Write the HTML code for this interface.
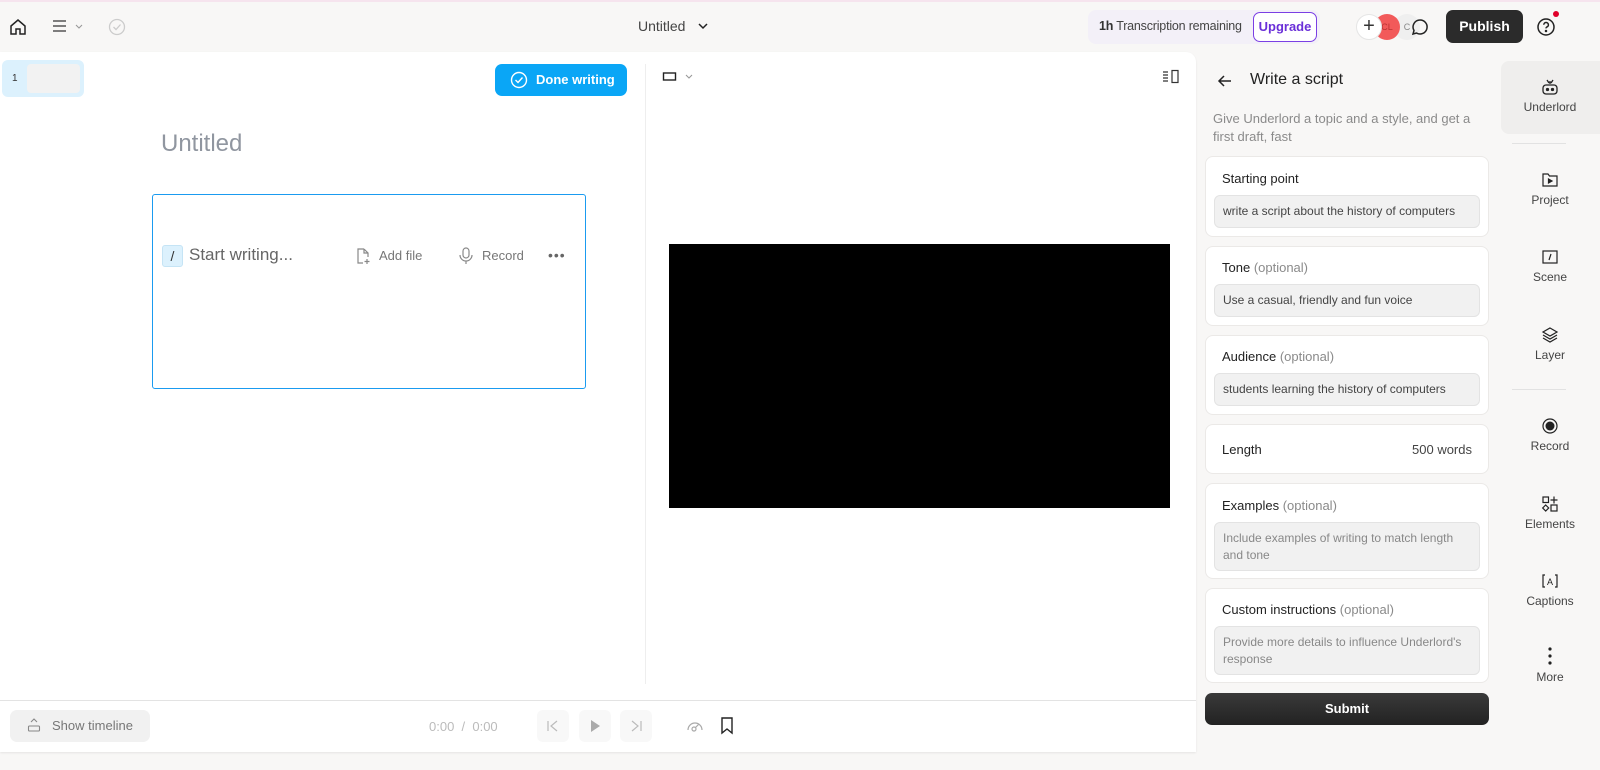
<!DOCTYPE html>
<html><head><meta charset="utf-8"><style>
*{box-sizing:border-box;margin:0;padding:0}
body{width:1600px;height:770px;overflow:hidden;background:#f8f7f6;font-family:"Liberation Sans",sans-serif;position:relative;color:#222}
.a{position:absolute}
.card{position:absolute;left:1205px;width:284px;background:#fff;border:1px solid #ebe9e7;border-radius:8px}
.card .t{position:absolute;left:16px;font-size:13px;color:#222}
.card .t span{color:#8a8a8a}
.inp{position:absolute;left:8px;right:8px;background:#f1f1f1;border:1px solid #e3e3e3;border-radius:6px;font-size:12px;color:#444;padding:0 8px;line-height:17px}
.side{position:absolute;left:1500px;width:100px;text-align:center;font-size:12px;color:#444}
.side svg{display:block;margin:0 auto 4px}
</style></head><body>
<div class="a" style="left:0;top:0;width:1600px;height:2px;background:#f6e4ee"></div>
<!-- top bar -->
<svg class="a" style="left:8px;top:17px" width="20" height="20" viewBox="0 0 20 20" fill="none" stroke="#222" stroke-width="1.5"><path d="M3 9L10 3l7 6v8h-5v-5H8v5H3z"/></svg>
<svg class="a" style="left:52px;top:19px" width="34" height="16" viewBox="0 0 34 16" fill="none" stroke="#555" stroke-width="1.4"><path d="M1 2h13M1 7h13M1 12h13"/><path d="M24 6l3 3 3-3" stroke="#999" stroke-width="1.1"/></svg>
<svg class="a" style="left:108px;top:18px" width="18" height="18" viewBox="0 0 18 18" fill="none" stroke="#ccc" stroke-width="1.3"><circle cx="9" cy="9" r="7.5"/><path d="M5.5 9l2.5 2.5 4.5-5"/></svg>
<div class="a" style="left:638px;top:18px;font-size:14px;color:#444">Untitled</div>
<svg class="a" style="left:697px;top:21px" width="12" height="10" viewBox="0 0 12 10" fill="none" stroke="#222" stroke-width="1.5"><path d="M2 3l4 4 4-4"/></svg>
<div class="a" style="left:1088px;top:10px;width:232px;height:34px;background:#f3f0f8;border-radius:8px"></div>
<div class="a" style="left:1099px;top:19px;font-size:12.5px;color:#444;letter-spacing:-0.2px;white-space:nowrap"><b style="color:#333">1h</b> Transcription remaining</div>
<div class="a" style="left:1253px;top:12px;width:64px;height:30px;border:1.5px solid #7b3fe4;border-radius:7px;background:#fff;color:#6a2fd8;font-size:13px;font-weight:bold;text-align:center;line-height:27px">Upgrade</div>
<div class="a" style="left:1394px;top:14px;width:26px;height:26px;border-radius:13px;background:#efefef;color:#888;font-size:9px;text-align:center;line-height:26px">C</div>
<div class="a" style="left:1374px;top:14px;width:26px;height:26px;border-radius:13px;background:#f25a5a;color:#b33;font-size:9px;text-align:center;line-height:26px">CL</div>
<div class="a" style="left:1356px;top:14px;width:26px;height:26px;border-radius:13px;background:#fff;border:1px solid #e5e5e5;font-size:20px;text-align:center;line-height:23px;color:#333">+</div>
<svg class="a" style="left:1410px;top:17px" width="20" height="20" viewBox="0 0 20 20" fill="none" stroke="#222" stroke-width="1.5"><path d="M10 3a7 7 0 1 1-3.5 13L3 17l1-3.5A7 7 0 0 1 10 3z"/></svg>
<div class="a" style="left:1446px;top:10px;width:77px;height:33px;background:#2b2b2b;border-radius:7px;color:#fff;font-weight:bold;font-size:14px;text-align:center;line-height:33px">Publish</div>
<svg class="a" style="left:1536px;top:17px" width="20" height="20" viewBox="0 0 20 20" fill="none" stroke="#222" stroke-width="1.5"><circle cx="10" cy="10" r="8"/><path d="M7.8 7.8a2.3 2.3 0 1 1 3 2.2c-.6.3-.8.7-.8 1.4"/><circle cx="10" cy="14" r=".5" fill="#222"/></svg>
<div class="a" style="left:1553px;top:11px;width:6px;height:6px;border-radius:3px;background:#e0002a"></div>
<!-- main panel -->
<div class="a" style="left:0;top:52px;width:1196px;height:700px;background:#fff;border-radius:0 10px 0 0;box-shadow:0 1px 2px rgba(0,0,0,.08)"></div>
<div class="a" style="left:2px;top:60px;width:82px;height:37px;background:#dcf1fd;border-radius:6px"></div>
<div class="a" style="left:12px;top:73px;font-size:10px;color:#333">1</div>
<div class="a" style="left:27px;top:64px;width:53px;height:29px;background:#f2f2f2;border-radius:4px"></div>
<div class="a" style="left:495px;top:64px;width:132px;height:32px;background:#0aa6f6;border-radius:7px;color:#fff;font-size:13px;font-weight:bold;line-height:32px;padding-left:41px">Done writing</div>
<svg class="a" style="left:510px;top:71px" width="18" height="18" viewBox="0 0 18 18" fill="none" stroke="#fff" stroke-width="1.4"><circle cx="9" cy="9" r="7.5"/><path d="M5.5 9l2.5 2.5 4.5-5"/></svg>
<div class="a" style="left:161px;top:130px;font-size:24px;color:#9096a0">Untitled</div>
<div class="a" style="left:152px;top:194px;width:434px;height:195px;border:1.5px solid #1a9bf0;border-radius:3px"></div>
<div class="a" style="left:162px;top:245px;width:21px;height:22px;background:#dcf1fd;border:1px solid #c5e4f5;border-radius:3px;font-size:14px;text-align:center;line-height:20px;color:#333">/</div>
<div class="a" style="left:189px;top:245px;font-size:17px;color:#666">Start writing...</div>
<svg class="a" style="left:354px;top:247px" width="18" height="18" viewBox="0 0 18 18" fill="none" stroke="#888" stroke-width="1.2"><path d="M10 2H4v14h5M10 2l4 4v4M10 2v4h4M13 12v5M10.5 14.5h5"/></svg>
<div class="a" style="left:379px;top:248px;font-size:13px;color:#777">Add file</div>
<svg class="a" style="left:458px;top:247px" width="16" height="18" viewBox="0 0 16 18" fill="none" stroke="#888" stroke-width="1.2"><rect x="5" y="1" width="6" height="10" rx="3"/><path d="M2 8a6 6 0 0 0 12 0M8 14v3"/></svg>
<div class="a" style="left:482px;top:248px;font-size:13px;color:#777">Record</div>
<div class="a" style="left:548px;top:247px;font-size:14px;color:#666;letter-spacing:1px">•••</div>
<div class="a" style="left:645px;top:64px;width:1px;height:620px;background:#eee"></div>
<svg class="a" style="left:662px;top:70px" width="34" height="14" viewBox="0 0 34 14" fill="none"><rect x="1.5" y="3" width="12" height="7" stroke="#222" stroke-width="1.4"/><path d="M24 5l3 3 3-3" stroke="#999" stroke-width="1.1"/></svg>
<svg class="a" style="left:1162px;top:69px" width="18" height="16" viewBox="0 0 18 16" fill="none" stroke="#333" stroke-width="1.2"><path d="M1 3h5M1 6h5M1 9h5M1 12h5"/><rect x="10" y="1.5" width="6" height="12"/></svg>
<div class="a" style="left:669px;top:244px;width:501px;height:264px;background:#000"></div>
<div class="a" style="left:0;top:700px;width:1196px;height:1px;background:#e3e3e3"></div>
<div class="a" style="left:10px;top:710px;width:140px;height:32px;background:#f1f1f1;border-radius:7px;font-size:13px;color:#777;line-height:32px;padding-left:42px">Show timeline</div>
<svg class="a" style="left:27px;top:717px" width="14" height="16" viewBox="0 0 14 16" fill="none" stroke="#888" stroke-width="1.1"><path d="M4 5l3-3 3 3"/><rect x="1.5" y="9" width="11" height="5" rx="1"/></svg>
<div class="a" style="left:429px;top:719px;font-size:13px;color:#bbb">0:00 &nbsp;/ &nbsp;0:00</div>
<div class="a" style="left:537px;top:710px;width:32px;height:32px;background:#f8f8f8;border-radius:6px"></div>
<div class="a" style="left:579px;top:710px;width:32px;height:32px;background:#f8f8f8;border-radius:6px"></div>
<div class="a" style="left:620px;top:710px;width:32px;height:32px;background:#f8f8f8;border-radius:6px"></div>
<svg class="a" style="left:545px;top:718px" width="16" height="16" viewBox="0 0 16 16" fill="none" stroke="#bbb" stroke-width="1.2"><path d="M3 3v10M12 3L6 8l6 5"/></svg>
<svg class="a" style="left:587px;top:718px" width="16" height="16" viewBox="0 0 16 16"><path d="M4 2l9 6-9 6z" fill="#aaa"/></svg>
<svg class="a" style="left:628px;top:718px" width="16" height="16" viewBox="0 0 16 16" fill="none" stroke="#bbb" stroke-width="1.2"><path d="M13 3v10M4 3l6 5-6 5"/></svg>
<svg class="a" style="left:686px;top:718px" width="18" height="16" viewBox="0 0 18 16" fill="none" stroke="#aaa" stroke-width="1.2"><path d="M2 12a7 7 0 0 1 14 0"/><circle cx="8" cy="11" r="2"/><path d="M9.5 9.5l3-3"/></svg>
<svg class="a" style="left:720px;top:717px" width="14" height="18" viewBox="0 0 14 18" fill="none" stroke="#222" stroke-width="1.4"><path d="M2 1h10v15l-5-4-5 4z"/></svg>
<!-- right panel -->
<svg class="a" style="left:1216px;top:72px" width="18" height="18" viewBox="0 0 18 18" fill="none" stroke="#222" stroke-width="1.5"><path d="M15 9H3M8 4L3 9l5 5"/></svg>
<div class="a" style="left:1250px;top:71px;font-size:16px;color:#222">Write a script</div>
<div class="a" style="left:1213px;top:110px;width:280px;font-size:13px;color:#8a8a8a;line-height:18px">Give Underlord a topic and a style, and get a first draft, fast</div>
<div class="card" style="top:156px;height:81px"><div class="t" style="top:14px">Starting point</div><div class="inp" style="top:38px;height:33px;line-height:31px">write a script about the history of computers</div></div>
<div class="card" style="top:246px;height:80px"><div class="t" style="top:13px">Tone <span>(optional)</span></div><div class="inp" style="top:37px;height:33px;line-height:31px">Use a casual, friendly and fun voice</div></div>
<div class="card" style="top:335px;height:80px"><div class="t" style="top:13px">Audience <span>(optional)</span></div><div class="inp" style="top:37px;height:33px;line-height:31px">students learning the history of computers</div></div>
<div class="card" style="top:424px;height:50px"><div class="t" style="top:17px">Length</div><div class="a" style="right:16px;top:17px;font-size:13px;color:#444">500 words</div></div>
<div class="card" style="top:483px;height:96px"><div class="t" style="top:14px">Examples <span>(optional)</span></div><div class="inp" style="top:38px;height:49px;padding-top:7px;color:#888">Include examples of writing to match length and tone</div></div>
<div class="card" style="top:588px;height:95px"><div class="t" style="top:13px">Custom instructions <span>(optional)</span></div><div class="inp" style="top:37px;height:49px;padding-top:7px;color:#888">Provide more details to influence Underlord's response</div></div>
<div class="a" style="left:1205px;top:693px;width:284px;height:32px;background:linear-gradient(#3a3a3a,#222);border-radius:7px;color:#fff;font-weight:bold;font-size:13px;text-align:center;line-height:32px">Submit</div>
<!-- sidebar -->
<div class="a" style="left:1501px;top:61px;width:99px;height:73px;background:#efeeed;border-radius:8px 0 0 8px"></div>
<div class="side" style="top:78px"><svg width="18" height="18" viewBox="0 0 18 18" fill="none" stroke="#222" stroke-width="1.3"><rect x="2" y="7" width="14" height="9" rx="3"/><circle cx="6.5" cy="11.5" r="1" fill="#222"/><circle cx="11.5" cy="11.5" r="1" fill="#222"/><path d="M6 2l2 3M12 2l-2 3M9 3v3"/></svg>Underlord</div>
<div class="a" style="left:1512px;top:143px;width:54px;height:1px;background:#e2e2e2"></div>
<div class="side" style="top:171px"><svg width="18" height="18" viewBox="0 0 18 18" fill="none" stroke="#222" stroke-width="1.2"><path d="M2 3h5l1.5 2H16v10H2z"/><path d="M7.5 8v4l3.5-2z" fill="#222"/></svg>Project</div>
<div class="side" style="top:248px"><svg width="18" height="18" viewBox="0 0 18 18" fill="none" stroke="#222" stroke-width="1.2"><rect x="2" y="3" width="14" height="12"/><path d="M10 6l-2 6"/></svg>Scene</div>
<div class="side" style="top:326px"><svg width="18" height="18" viewBox="0 0 18 18" fill="none" stroke="#222" stroke-width="1.2"><path d="M9 2l7 4-7 4-7-4z"/><path d="M2 9l7 4 7-4M2 12l7 4 7-4"/></svg>Layer</div>
<div class="a" style="left:1512px;top:389px;width:54px;height:1px;background:#e2e2e2"></div>
<div class="side" style="top:417px"><svg width="18" height="18" viewBox="0 0 18 18"><circle cx="9" cy="9" r="7" fill="none" stroke="#222" stroke-width="1.2"/><circle cx="9" cy="9" r="4.5" fill="#222"/></svg>Record</div>
<div class="side" style="top:495px"><svg width="18" height="18" viewBox="0 0 18 18" fill="none" stroke="#222" stroke-width="1.2"><rect x="2" y="2" width="5.5" height="5.5"/><path d="M13 1.5v7M9.5 5h7M4.7 10l3 3-3 3-3-3z"/><rect x="10" y="10" width="6" height="6"/></svg>Elements</div>
<div class="side" style="top:572px"><svg width="18" height="18" viewBox="0 0 18 18" fill="none" stroke="#222" stroke-width="1.2"><path d="M4 3H2v12h2M14 3h2v12h-2"/><text x="9" y="13" font-size="9" text-anchor="middle" fill="#222" stroke="none" font-family="Liberation Sans">A</text></svg>Captions</div>
<div class="side" style="top:646px"><svg width="18" height="20" viewBox="0 0 18 20" fill="#222"><circle cx="9" cy="3" r="1.6"/><circle cx="9" cy="10" r="1.6"/><circle cx="9" cy="17" r="1.6"/></svg>More</div>
</body></html>
